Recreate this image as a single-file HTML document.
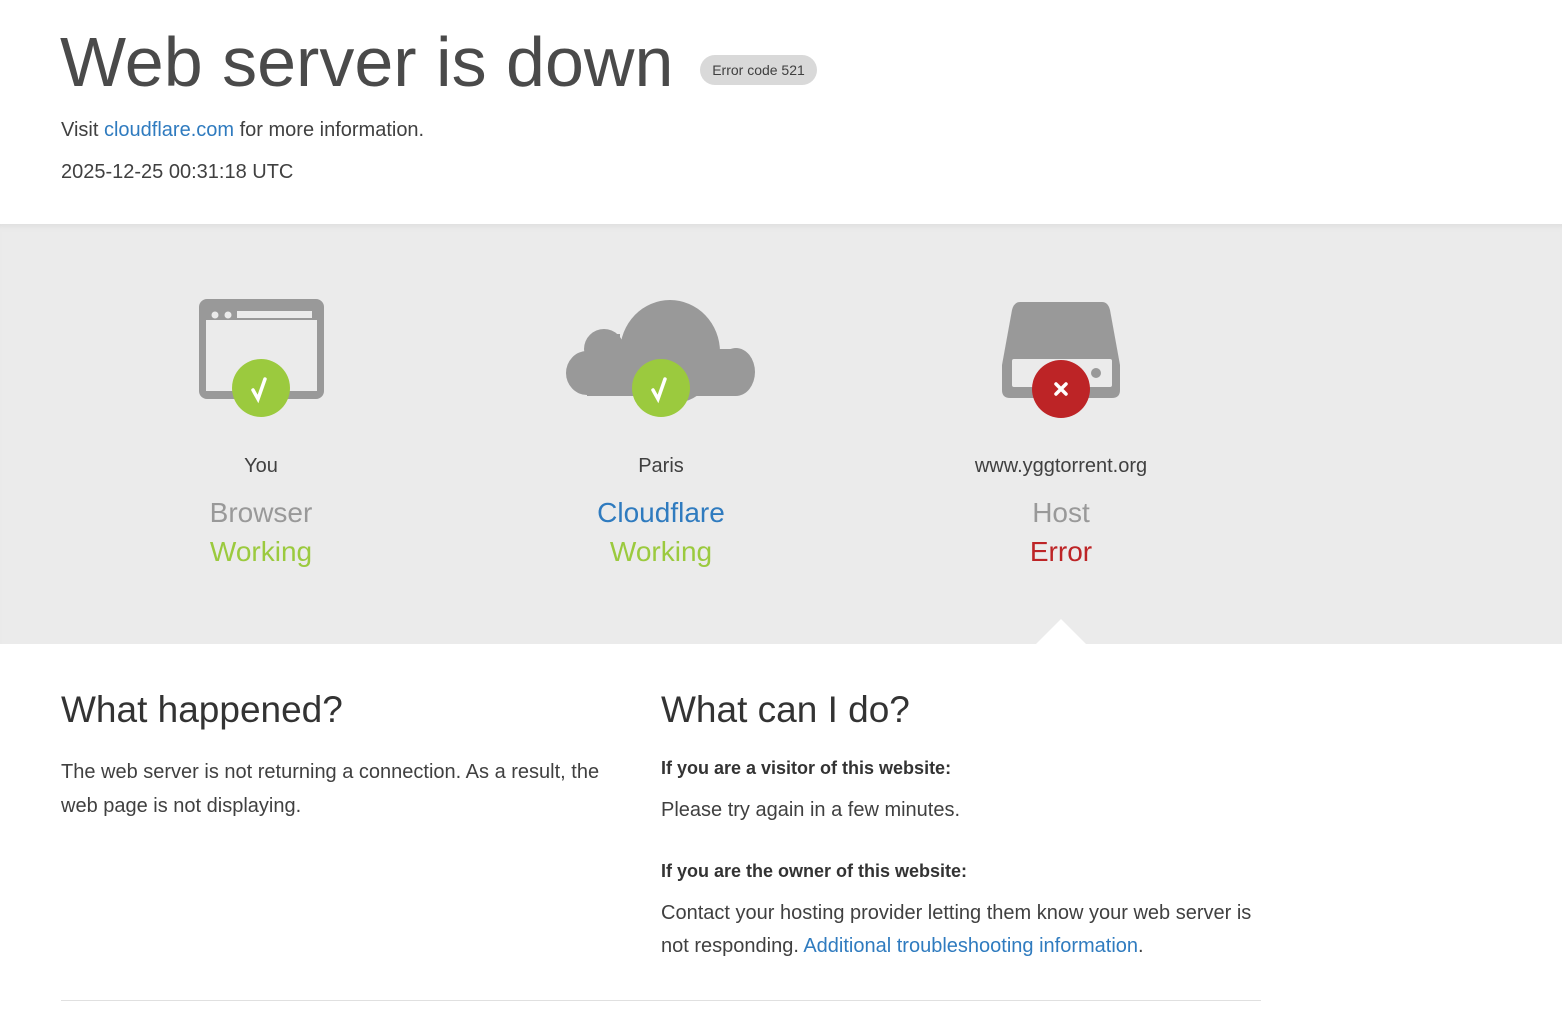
<!DOCTYPE html>
<html><head><meta charset="utf-8"><style>
*{margin:0;padding:0;box-sizing:border-box}
body{width:1562px;height:1019px;position:relative;background:#fff;font-family:"Liberation Sans",sans-serif;color:#404040;overflow:hidden}
.a{position:absolute;white-space:nowrap}
a{color:#2f7bbf;text-decoration:none}
.band{position:absolute;left:0;top:224px;width:1562px;height:420px;background:#ebebeb;box-shadow:inset 0 6px 6px -4px #ddd}
.c{position:absolute;width:400px;text-align:center;white-space:nowrap}
</style></head><body>
<div class="a" style="left:60px;top:22px;font-size:70px;color:#4a4a4a">Web server is down</div>
<div class="a" style="left:700px;top:55px;height:30px;width:117px;border-radius:15px;background:#d9d9d9;font-size:14px;line-height:30px;text-align:center;color:#404040">Error code 521</div>
<div class="a" style="left:61px;top:119px;font-size:20px">Visit <a>cloudflare.com</a> for more information.</div>
<div class="a" style="left:61px;top:161px;font-size:20px">2025-12-25 00:31:18 UTC</div>

<div class="band"></div>
<svg class="a" style="left:0;top:224px" width="1562" height="420">
<!-- browser -->
<rect x="199" y="75" width="125" height="100" rx="8" fill="#999"/>
<rect x="206" y="96" width="111" height="71" fill="#ebebeb"/>
<rect x="237" y="87" width="75" height="7" fill="#ebebeb"/>
<circle cx="215" cy="91" r="3.5" fill="#ebebeb"/><circle cx="228" cy="91" r="3.5" fill="#ebebeb"/>
<circle cx="261" cy="164" r="29" fill="#9bca3e"/>
<path d="M253 166 l5 9 l7 -20" stroke="#fff" stroke-width="3.5" fill="none" stroke-linecap="round"/>
<!-- cloud -->
<g fill="#999">
<ellipse cx="670" cy="128" rx="50" ry="52"/>
<circle cx="604" cy="125" r="20"/>
<ellipse cx="587" cy="149" rx="21" ry="22"/>
<ellipse cx="736" cy="148" rx="19" ry="24"/>
<rect x="587" y="125" width="149" height="47"/>
<rect x="600" y="110" width="20" height="30"/>
</g>
<circle cx="661" cy="164" r="29" fill="#9bca3e"/>
<path d="M653 166 l5 9 l7 -20" stroke="#fff" stroke-width="3.5" fill="none" stroke-linecap="round"/>
<!-- server -->
<path d="M1020 78 h82 q6 0 8 8 l10 55 v25 q0 8 -8 8 h-102 q-8 0 -8 -8 v-25 l10 -55 q2 -8 8 -8z" fill="#999"/>
<rect x="1012" y="135" width="100" height="28" rx="2" fill="#ebebeb"/>
<circle cx="1096" cy="149" r="5" fill="#999"/>
<circle cx="1061" cy="165" r="29" fill="#bd2426"/>
<path d="M1056 160 l10 10 M1066 160 l-10 10" stroke="#fff" stroke-width="3.5" stroke-linecap="round"/>
</svg>
<div class="c" style="left:61px;top:455px;font-size:20px">You</div>
<div class="c" style="left:61px;top:497px;font-size:28px;color:#999">Browser</div>
<div class="c" style="left:61px;top:536px;font-size:28px;color:#9bca3e">Working</div>
<div class="c" style="left:461px;top:455px;font-size:20px">Paris</div>
<div class="c" style="left:461px;top:497px;font-size:28px;color:#2f7bbf">Cloudflare</div>
<div class="c" style="left:461px;top:536px;font-size:28px;color:#9bca3e">Working</div>
<div class="c" style="left:861px;top:455px;font-size:20px">www.yggtorrent.org</div>
<div class="c" style="left:861px;top:497px;font-size:28px;color:#999">Host</div>
<div class="c" style="left:861px;top:536px;font-size:28px;color:#bd2426">Error</div>
<div class="a" style="left:1036px;top:619px;width:0;height:0;border-left:25px solid transparent;border-right:25px solid transparent;border-bottom:25px solid #fff"></div>

<div class="a" style="left:61px;top:689px;font-size:37px;color:#333">What happened?</div>
<div class="a" style="left:61px;top:755px;font-size:20px;line-height:34px">The web server is not returning a connection. As a result, the<br>web page is not displaying.</div>
<div class="a" style="left:661px;top:689px;font-size:37px;color:#333">What can I do?</div>
<div class="a" style="left:661px;top:758px;font-size:18px;font-weight:bold;color:#333">If you are a visitor of this website:</div>
<div class="a" style="left:661px;top:799px;font-size:20px">Please try again in a few minutes.</div>
<div class="a" style="left:661px;top:861px;font-size:18px;font-weight:bold;color:#333">If you are the owner of this website:</div>
<div class="a" style="left:661px;top:897px;font-size:20px;line-height:33px">Contact your hosting provider letting them know your web server is<br>not responding. <a>Additional troubleshooting information</a>.</div>
<div class="a" style="left:61px;top:1000px;width:1200px;height:1px;background:#e0e0e0"></div>
</body></html>
